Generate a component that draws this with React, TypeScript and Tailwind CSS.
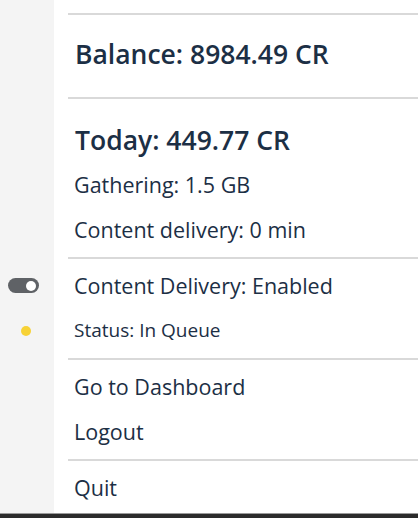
import React from "react"

const font = { fontFamily: '"Open Sans", "Noto Sans", sans-serif' }

function Separator() {
  return (
    <div className="flex h-[11px] items-center">
      <div className="ml-[68px] h-[2px] flex-1 bg-[#d9d9d9]" />
    </div>
  )
}

function Row({
  children,
  gutter,
  className = "",
}: {
  children: React.ReactNode
  gutter?: React.ReactNode
  className?: string
}) {
  return (
    <div className={`flex h-[45px] items-center ${className}`}>
      <div className="flex w-[54px] shrink-0 items-center justify-center">{gutter}</div>
      <div className="pl-[20px] leading-none">{children}</div>
    </div>
  )
}

export default function App() {
  return (
    <div
      className="relative flex h-[518px] w-[418px] flex-col overflow-hidden bg-white text-[#1c2f45]"
      style={font}
    >
      <div className="absolute inset-y-0 left-0 w-[54px] bg-[#f4f4f4]" />
      <div className="relative flex flex-1 flex-col">
        <div className="h-[8px]" />
        <Separator />
        <div className="flex h-[73px] items-center pb-[2px] pl-[75px] text-[26.5px] font-semibold leading-none">
          Balance: 8984.49 CR
        </div>
        <Separator />
        <div className="flex h-[59px] items-end pb-[9px] pl-[75px] text-[26.5px] font-semibold leading-none">
          Today: 449.77 CR
        </div>
        <Row className="text-[21.5px]">Gathering: 1.5 GB</Row>
        <Row className="text-[21.5px]">Content delivery: 0 min</Row>
        <Separator />
        <Row
          className="text-[21.5px]"
          gutter={
            <span className="ml-[-8px] flex h-[15px] w-[31px] items-center justify-end rounded-full bg-[#5f6266] pr-[3px]">
              <span className="h-[10px] w-[10px] rounded-full bg-white" />
            </span>
          }
        >
          Content Delivery: Enabled
        </Row>
        <Row
          className="text-[19px]"
          gutter={<span className="ml-[-2px] h-[10px] w-[10px] rounded-full bg-[#f7d236]" />}
        >
          Status: In Queue
        </Row>
        <Separator />
        <Row className="text-[21.5px]">Go to Dashboard</Row>
        <Row className="text-[21.5px]">Logout</Row>
        <Separator />
        <Row className="text-[21.5px]">Quit</Row>
      </div>
      <div className="relative h-[1px] bg-[#9a9a9a]" />
      <div className="relative h-[4px] bg-[#2b2b2b]" />
    </div>
  )
}
